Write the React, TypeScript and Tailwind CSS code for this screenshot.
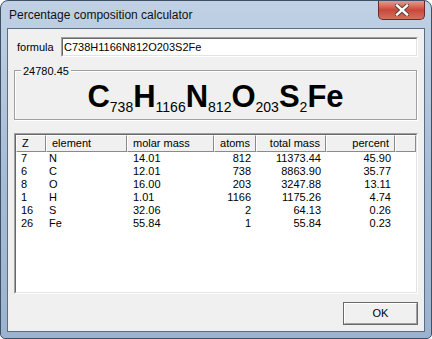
const rows = [
  ["7", "N", "14.01", "812", "11373.44", "45.90"],
  ["6", "C", "12.01", "738", "8863.90", "35.77"],
  ["8", "O", "16.00", "203", "3247.88", "13.11"],
  ["1", "H", "1.01", "1166", "1175.26", "4.74"],
  ["16", "S", "32.06", "2", "64.13", "0.26"],
  ["26", "Fe", "55.84", "1", "55.84", "0.23"],
];

const formula: [string, string][] = [
  ["C", "738"],
  ["H", "1166"],
  ["N", "812"],
  ["O", "203"],
  ["S", "2"],
  ["Fe", ""],
];

const HeaderCell = ({
  label,
  width,
  right,
}: {
  label: string;
  width: string;
  right?: boolean;
}) => (
  <div
    className={`${width} h-full flex items-center bg-[#f0f0f0] border-l border-t border-white border-r border-b border-r-[#8a8a8a] border-b-[#8a8a8a] ${
      right ? "justify-end pr-[5px]" : "pl-[5px]"
    }`}
  >
    {label}
  </div>
);

export default function App() {
  return (
    <div className="w-[432px] h-[339px] flex flex-col px-[6px] border border-[#3e4f66] rounded-t-[8px] rounded-b-[5px] bg-gradient-to-b from-[#c0d1e4] via-[#a7bdd6] to-[#9cb3cf] font-['Liberation_Sans',Arial,sans-serif] text-[11px] text-black">
      {/* title bar */}
      <div className="h-[27px] flex items-start shrink-0">
        <div className="pt-[7px] pl-[2px] text-[12px] leading-[15px] text-[#111]">
          Percentage composition calculator
        </div>
        <div className="ml-auto w-[47px] h-[19px] rounded-b-[5px] border border-t-0 border-[#6b2a28] bg-gradient-to-b from-[#e59a8c] via-[#c9463a] to-[#d4705f] flex items-center justify-center">
          <svg width="14" height="12" viewBox="0 0 14 12">
            <path
              d="M2 1.5 L12 10.5 M12 1.5 L2 10.5"
              stroke="#4a3a3a"
              strokeWidth="4.2"
              strokeLinecap="square"
            />
            <path
              d="M2 1.5 L12 10.5 M12 1.5 L2 10.5"
              stroke="#ffffff"
              strokeWidth="2.4"
              strokeLinecap="square"
            />
          </svg>
        </div>
      </div>

      {/* client area */}
      <div className="h-[304px] shrink-0 border border-[#5b6b80] bg-[#f0f0f0] flex flex-col px-[6px]">
        <div className="mt-[8px] flex items-center h-[20px]">
          <div className="w-[47px] pl-[3px]">formula</div>
          <div className="flex-1 h-[20px] border border-t-[#a0a0a0] border-l-[#a0a0a0] border-b-white border-r-white">
            <div className="h-full border border-t-[#696969] border-l-[#696969] border-b-[#e3e3e3] border-r-[#e3e3e3] bg-white flex items-center pl-[1px]">
              C738H1166N812O203S2Fe
            </div>
          </div>
        </div>

        <div className="relative mt-[13px] h-[50px] border border-[#a0a0a0] shadow-[inset_1px_1px_0_#fff,1px_1px_0_#fff] mr-[1px] mb-[1px]">
          <div className="absolute -top-[7px] left-[6px] bg-[#f0f0f0] px-[2px] leading-[14px]">
            24780.45
          </div>
          <div className="pt-[10px] h-[32px] leading-[32px] text-center font-bold text-[31px] box-content whitespace-nowrap">
            {formula.map(([el, n]) => (
              <span key={el}>
                {el}
                {n && (
                  <span className="text-[14px] font-normal align-[-5px]">
                    {n}
                  </span>
                )}
              </span>
            ))}
          </div>
        </div>

        <div className="mt-[12px] h-[161px] border border-t-[#a0a0a0] border-l-[#a0a0a0] border-b-white border-r-white">
          <div className="h-full border border-t-[#696969] border-l-[#696969] border-b-[#e3e3e3] border-r-[#e3e3e3] bg-white flex flex-col">
            <div className="h-[17px] flex shrink-0">
              <HeaderCell label="Z" width="w-[30px]" />
              <HeaderCell label="element" width="w-[81px]" />
              <HeaderCell label="molar mass" width="w-[87px]" />
              <HeaderCell label="atoms" width="w-[42px]" right />
              <HeaderCell label="total mass" width="w-[70px]" right />
              <HeaderCell label="percent" width="w-[69px]" right />
              <HeaderCell label="" width="flex-1" />
            </div>
            {rows.map((r) => (
              <div key={r[0]} className="h-[13px] leading-[13px] flex">
                <div className="w-[30px] pl-[5px]">{r[0]}</div>
                <div className="w-[81px] pl-[3px]">{r[1]}</div>
                <div className="w-[87px] pl-[6px]">{r[2]}</div>
                <div className="w-[42px] pr-[5px] text-right">{r[3]}</div>
                <div className="w-[70px] pr-[5px] text-right">{r[4]}</div>
                <div className="w-[69px] pr-[4px] text-right">{r[5]}</div>
              </div>
            ))}
          </div>
        </div>

        <div className="mt-[8px] self-end w-[75px] h-[23px] border border-[#696969]">
          <div className="h-full border border-t-white border-l-white border-b-[#a0a0a0] border-r-[#a0a0a0] bg-[#f0f0f0] flex items-center justify-center">
            OK
          </div>
        </div>
      </div>
    </div>
  );
}
